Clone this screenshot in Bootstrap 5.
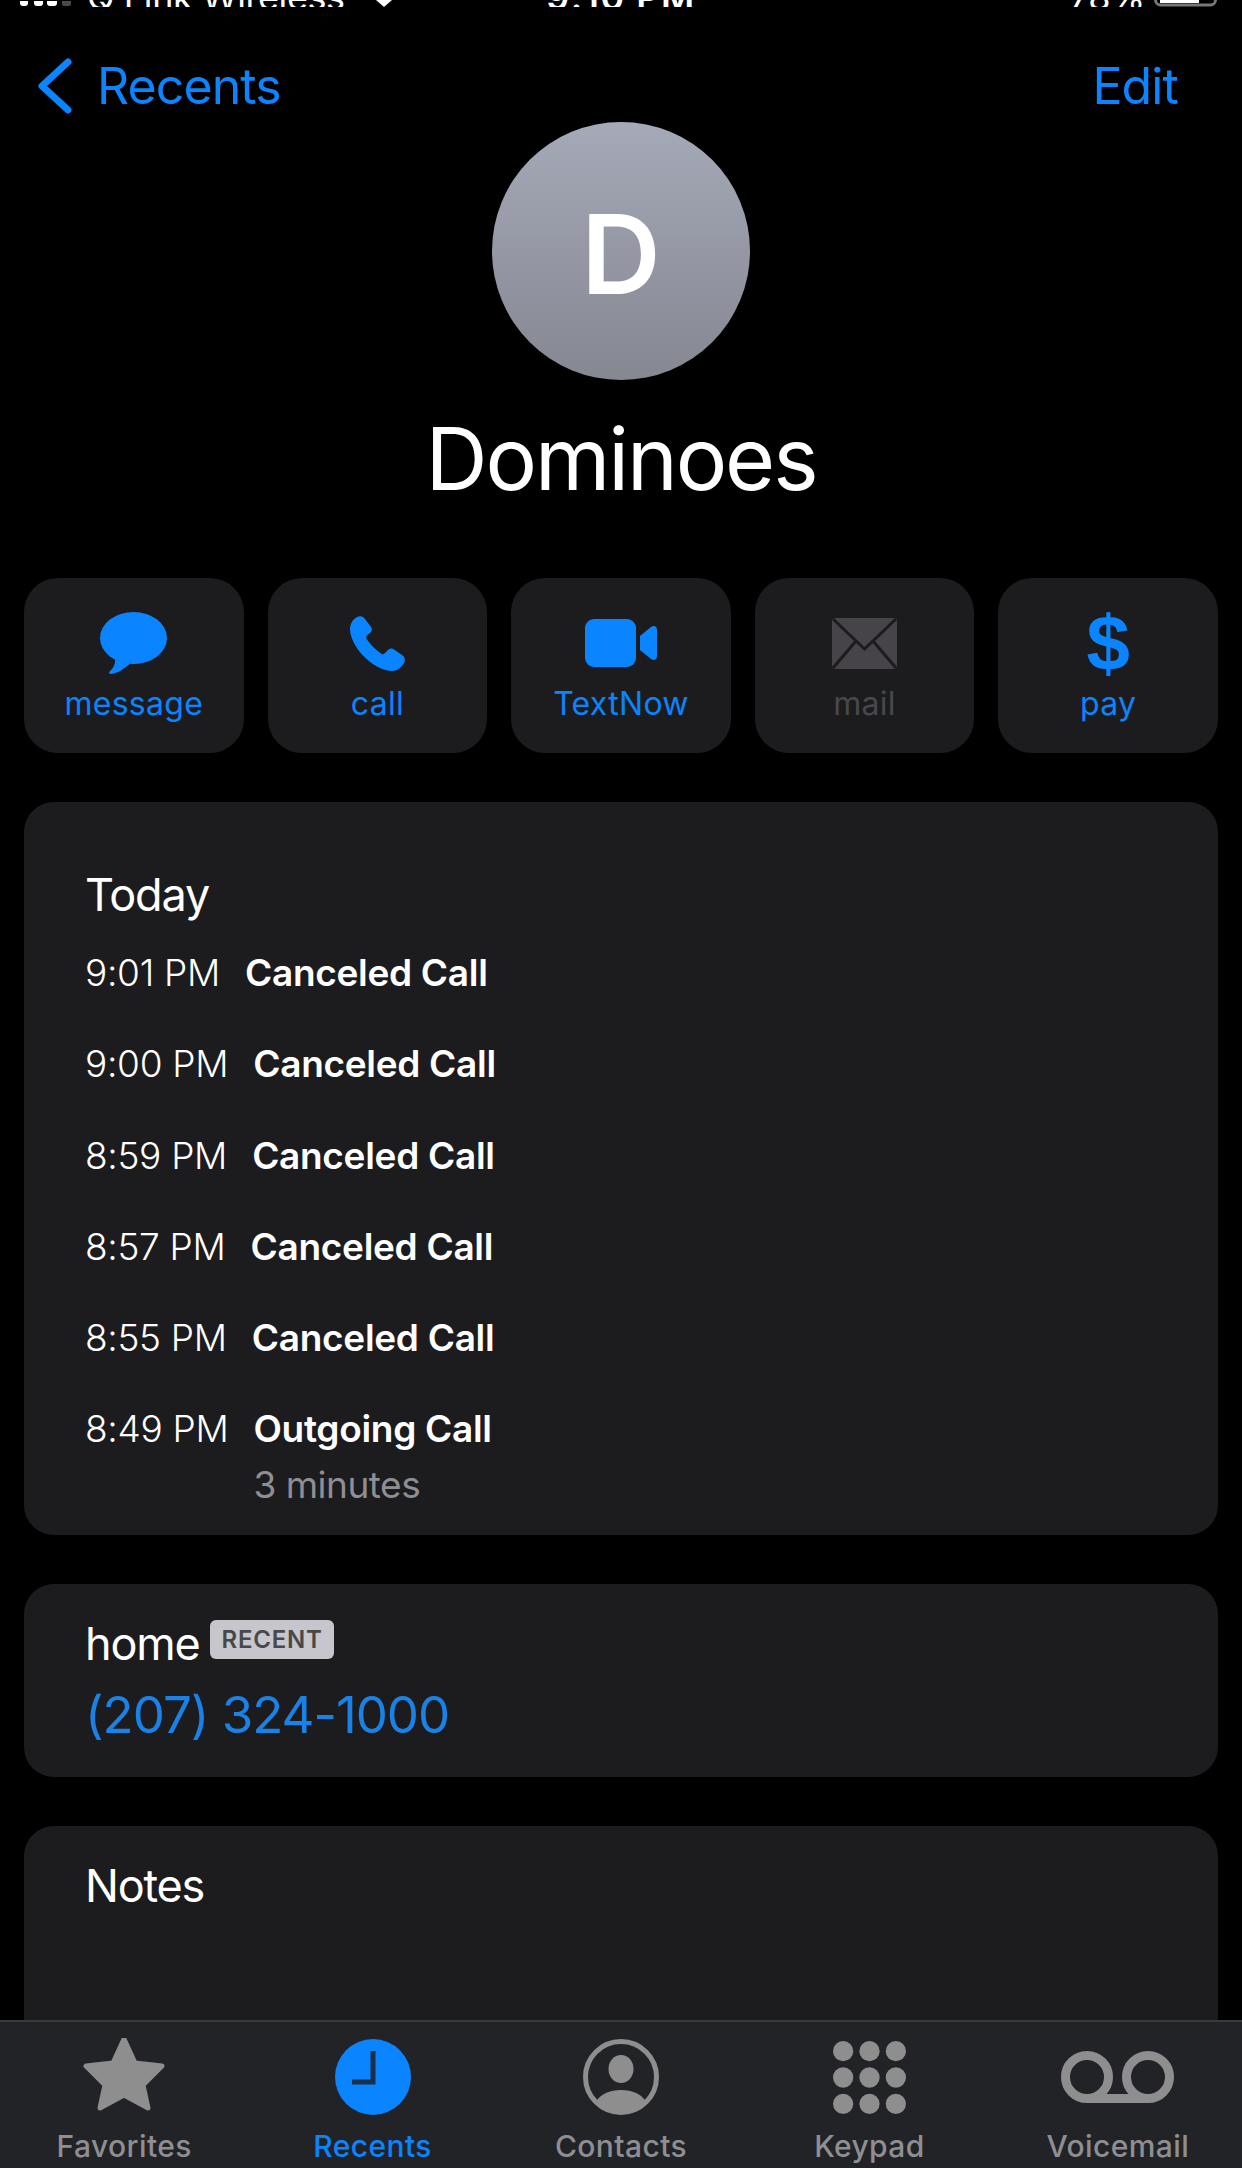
<!DOCTYPE html>
<html lang="en">
<head>
    <meta charset="UTF-8">
    <meta name="viewport" content="width=device-width, initial-scale=1.0">
    <title>Dominoes</title>
    <link href="https://cdn.jsdelivr.net/npm/bootstrap@5.3.0/dist/css/bootstrap.min.css" rel="stylesheet">
    <style>
        /* colores y medidas de la pantalla */
        body {
            height: 2168px;
            background-color: #000;
            color: #fff;
            font-family: Inter, "Liberation Sans", sans-serif;
            overflow: hidden;
        }
        .screen-body { min-height: 0; overflow: hidden; }

        .status-strip { height: 7px; overflow: hidden; font-size: 36px; line-height: 36px; }
        .status-strip > div { height: 7px; }
        .status-text { margin-bottom: -8px; letter-spacing: -.4px; }
        .status-time { letter-spacing: 1.5px; }
        .status-left { padding-left: 20px; }
        .status-right { padding-right: 24px; }
        .carrier { margin-left: 15px; }
        .wifi-mark { margin-left: 31px; }
        .batt-mark { margin-left: 9px; }

        .top-bar { height: 115px; padding: 44px 64px 0 38px; color: #0a84ff; font-size: 50px; line-height: 70px; letter-spacing: -.9px; }
        .top-bar svg { margin: 7px 25px 0 0; }

        .avatar-disc {
            width: 258px; height: 258px; padding-top: 6px;
            background: linear-gradient(#a5aab8, #858791);
            font-size: 110px; font-weight: 600; line-height: 1;
        }
        .contact-name { font-size: 86px; font-weight: 400; line-height: 100px; margin: 29px 0 0; letter-spacing: -2.1px; }

        .action-row { margin: 69px 24px 0; gap: 24px; }
        .action-tile {
            flex: 1 1 0; height: 175px; padding-top: 30px;
            background-color: #1c1c1e; border-radius: 34px;
            color: #0a84ff; font-size: 32px; line-height: 40px; letter-spacing: .3px;
        }
        .action-tile.is-off { color: #48484a; }
        .tile-icon { height: 70px; margin-bottom: 6px; }
        .dollar-glyph { font-family: "Liberation Sans", sans-serif; font-size: 78px; line-height: 70px; font-weight: 700; letter-spacing: 0; }

        .info-panel {
            margin: 49px 24px 0;
            background-color: #1c1c1e; border: 0; border-radius: 30px;
            padding: 0 61px;
        }
        .panel-today { height: 733px; padding-top: 63px; }
        .panel-home { height: 193px; padding-top: 30px; }
        .panel-notes { height: 400px; padding-top: 30px; }
        .panel-title { font-size: 45px; line-height: 60px; letter-spacing: -1.2px; }
        .today-head { margin-bottom: 23px; }
        .call-line { height: 91.3px; font-size: 37px; line-height: 50px; gap: 25px; }
        .call-time { font-weight: 300; letter-spacing: -.3px; }
        .call-kind { font-weight: 600; letter-spacing: -.3px; }
        .call-sub { color: #8e8e93; font-weight: 400; margin-top: 6px; letter-spacing: -.5px; }
        .recent-tag {
            background-color: #c7c6cc; color: #48484a; border-radius: 6px;
            font-size: 24px; font-weight: 600; line-height: 39px; height: 39px;
            padding: 0 11px; letter-spacing: .8px; margin: 6px 0 0 3px;
        }
        .phone-num { color: #1a82e6; font-size: 51px; line-height: 66px; letter-spacing: -1px; margin-top: 8px; }

        .tab-strip { height: 148px; background-color: #222326; border-top: 2px solid #3a3a3c; flex-shrink: 0; color: #8e8e93; }
        .tab-cell { flex: 1 1 0; font-size: 30px; font-weight: 500; line-height: 36px; letter-spacing: .4px; }
        .tab-cell.is-on { color: #0a84ff; }
        .tab-icon { height: 82px; margin-top: 14px; margin-bottom: 10px; }
    </style>
</head>
<body class="d-flex flex-column">

    <div class="screen-body flex-grow-1">
        <div class="status-strip d-flex">
            <div class="status-left flex-fill d-flex align-items-end w-25">
                <svg width="52" height="6" viewBox="0 0 52 6"><rect x="0" y="-4" width="8" height="9" rx="3" fill="#fff"/><rect x="14" y="-4" width="9" height="9" rx="3" fill="#fff"/><rect x="27" y="-4" width="10" height="9" rx="3" fill="#fff"/><rect x="42" y="-4" width="9" height="9" rx="2" fill="#4a4a4a"/></svg>
                <span class="status-text carrier">Q Link Wireless</span>
                <svg class="wifi-mark" width="16" height="7" viewBox="0 0 16 7"><path d="M0 0H16L8 7Z" fill="#fff"/></svg>
            </div>
            <div class="flex-fill d-flex align-items-end justify-content-center w-25">
                <span class="status-text status-time fw-semibold">9:10 PM</span>
            </div>
            <div class="status-right flex-fill d-flex align-items-end justify-content-end w-25">
                <span class="status-text">78%</span>
                <svg class="batt-mark" width="64" height="7" viewBox="0 0 64 7"><rect x="1.5" y="-12" width="60" height="17" rx="5" fill="none" stroke="#777" stroke-width="3"/><rect x="6" y="-8" width="39" height="11" fill="#fff"/></svg>
            </div>
        </div>

        <div class="top-bar d-flex justify-content-between">
            <div class="d-flex align-items-start">
                <svg width="34" height="56" viewBox="0 0 34 56"><path d="M30 4 4 28 30 52" fill="none" stroke="#0a84ff" stroke-width="7" stroke-linecap="round" stroke-linejoin="round"/></svg>
                <span>Recents</span>
            </div>
            <span>Edit</span>
        </div>

        <div class="avatar-disc rounded-circle mx-auto d-flex align-items-center justify-content-center">D</div>
        <h1 class="contact-name text-center">Dominoes</h1>

        <div class="action-row d-flex">
            <div class="action-tile d-flex flex-column align-items-center">
                <div class="tile-icon d-flex align-items-center">
                    <svg width="67" height="62" viewBox="0 0 67 62"><ellipse cx="33.5" cy="26" rx="33.5" ry="26" fill="#0a84ff"/><path d="M15 44C16 52 13 57 9 60 9 61.5 10 62 11 62 18 61 24 57 31 51Z" fill="#0a84ff"/></svg>
                </div>
                <span>message</span>
            </div>
            <div class="action-tile d-flex flex-column align-items-center">
                <div class="tile-icon d-flex align-items-center">
                    <svg width="55" height="55" viewBox="0 0 55 55"><path d="M7 1C10-.5 13 0 15 3L21 11C22.5 13.5 22 15 20 17L16.5 20C16 21 16 22 17 23.5 20 28 26 34 31 37.5 32.5 38.5 33.5 38.5 35 37L38 34C40 32 42 32 44 33.5L52 39C55 41 55.500 44 54 47 51 52 47 55 42 55 30 55 17 45 9 35 3 27 0 19 0 13 0 8 3 3 7 1Z" fill="#0a84ff"/></svg>
                </div>
                <span>call</span>
            </div>
            <div class="action-tile d-flex flex-column align-items-center">
                <div class="tile-icon d-flex align-items-center">
                    <svg width="72" height="48" viewBox="0 0 72 48"><rect width="51" height="48" rx="9" fill="#0a84ff"/><path d="M55 17 66 8C69 6 72 7 72 11V37C72 41 69 42 66 40L55 31Z" fill="#0a84ff"/></svg>
                </div>
                <span>TextNow</span>
            </div>
            <div class="action-tile is-off d-flex flex-column align-items-center">
                <div class="tile-icon d-flex align-items-center">
                    <svg width="65" height="51" viewBox="0 0 65 51"><rect width="65" height="51" rx="3" fill="#464449"/><path d="M1 1 32.500 31 64 1M1 50 24 23M64 50 41 23" fill="none" stroke="#1c1c1e" stroke-width="3"/></svg>
                </div>
                <span>mail</span>
            </div>
            <div class="action-tile d-flex flex-column align-items-center">
                <div class="tile-icon dollar-glyph">$</div>
                <span>pay</span>
            </div>
        </div>

        <div class="card info-panel panel-today">
            <div class="panel-title today-head">Today</div>
            <div class="call-line d-flex"><span class="call-time">9:01 PM</span><span class="call-kind">Canceled Call</span></div>
            <div class="call-line d-flex"><span class="call-time">9:00 PM</span><span class="call-kind">Canceled Call</span></div>
            <div class="call-line d-flex"><span class="call-time">8:59 PM</span><span class="call-kind">Canceled Call</span></div>
            <div class="call-line d-flex"><span class="call-time">8:57 PM</span><span class="call-kind">Canceled Call</span></div>
            <div class="call-line d-flex"><span class="call-time">8:55 PM</span><span class="call-kind">Canceled Call</span></div>
            <div class="call-line d-flex">
                <span class="call-time">8:49 PM</span>
                <div class="d-flex flex-column"><span class="call-kind">Outgoing Call</span><span class="call-sub">3 minutes</span></div>
            </div>
        </div>

        <div class="card info-panel panel-home">
            <div class="d-flex align-items-start gap-2">
                <span class="panel-title">home</span>
                <span class="recent-tag">RECENT</span>
            </div>
            <div class="phone-num">(207) 324-1000</div>
        </div>

        <div class="card info-panel panel-notes">
            <div class="panel-title">Notes</div>
        </div>
    </div>

    <div class="tab-strip d-flex">
        <div class="tab-cell d-flex flex-column align-items-center">
            <div class="tab-icon d-flex align-items-center">
                <svg width="82" height="78" viewBox="0 3 82 78"><path d="M41 4 52 28 79 31 60 50 65 73 41 60 17 73 22 50 3 31 30 28Z" fill="#8e8e8e" stroke="#8e8e8e" stroke-width="5" stroke-linejoin="round"/></svg>
            </div>
            <span>Favorites</span>
        </div>
        <div class="tab-cell is-on d-flex flex-column align-items-center">
            <div class="tab-icon d-flex align-items-center">
                <svg width="76" height="76" viewBox="0 0 76 76"><circle cx="38" cy="38" r="38" fill="#0a84ff"/><path d="M38 12V43H17" fill="none" stroke="#1b2f4a" stroke-width="5"/></svg>
            </div>
            <span>Recents</span>
        </div>
        <div class="tab-cell d-flex flex-column align-items-center">
            <div class="tab-icon d-flex align-items-center">
                <svg width="76" height="76" viewBox="0 0 76 76"><circle cx="38" cy="38" r="35.500" fill="none" stroke="#8e8e8e" stroke-width="5"/><ellipse cx="38" cy="30" rx="12.500" ry="14" fill="#8e8e8e"/><path d="M13 63C17 55 27 51 38 51 49 51 59 55 63 63 56 71 47 74 38 74 29 74 20 71 13 63Z" fill="#8e8e8e"/></svg>
            </div>
            <span>Contacts</span>
        </div>
        <div class="tab-cell d-flex flex-column align-items-center">
            <div class="tab-icon d-flex align-items-center">
                <svg width="73" height="73" viewBox="0 0 72 72" fill="#8e8e8e"><circle cx="10" cy="10" r="10"/><circle cx="36" cy="10" r="10"/><circle cx="62" cy="10" r="10"/><circle cx="10" cy="36" r="10"/><circle cx="36" cy="36" r="10"/><circle cx="62" cy="36" r="10"/><circle cx="10" cy="62" r="10"/><circle cx="36" cy="62" r="10"/><circle cx="62" cy="62" r="10"/></svg>
            </div>
            <span>Keypad</span>
        </div>
        <div class="tab-cell d-flex flex-column align-items-center">
            <div class="tab-icon d-flex align-items-center">
                <svg width="113" height="52" viewBox="0 0 113 52"><g fill="none" stroke="#8e8e8e" stroke-width="9"><circle cx="26" cy="26" r="21.500"/><circle cx="87" cy="26" r="21.500"/><path d="M26 47.500H87"/></g></svg>
            </div>
            <span>Voicemail</span>
        </div>
    </div>

    <script src="https://cdn.jsdelivr.net/npm/bootstrap@5.3.0/dist/js/bootstrap.bundle.min.js"></script>
</body>
</html>
